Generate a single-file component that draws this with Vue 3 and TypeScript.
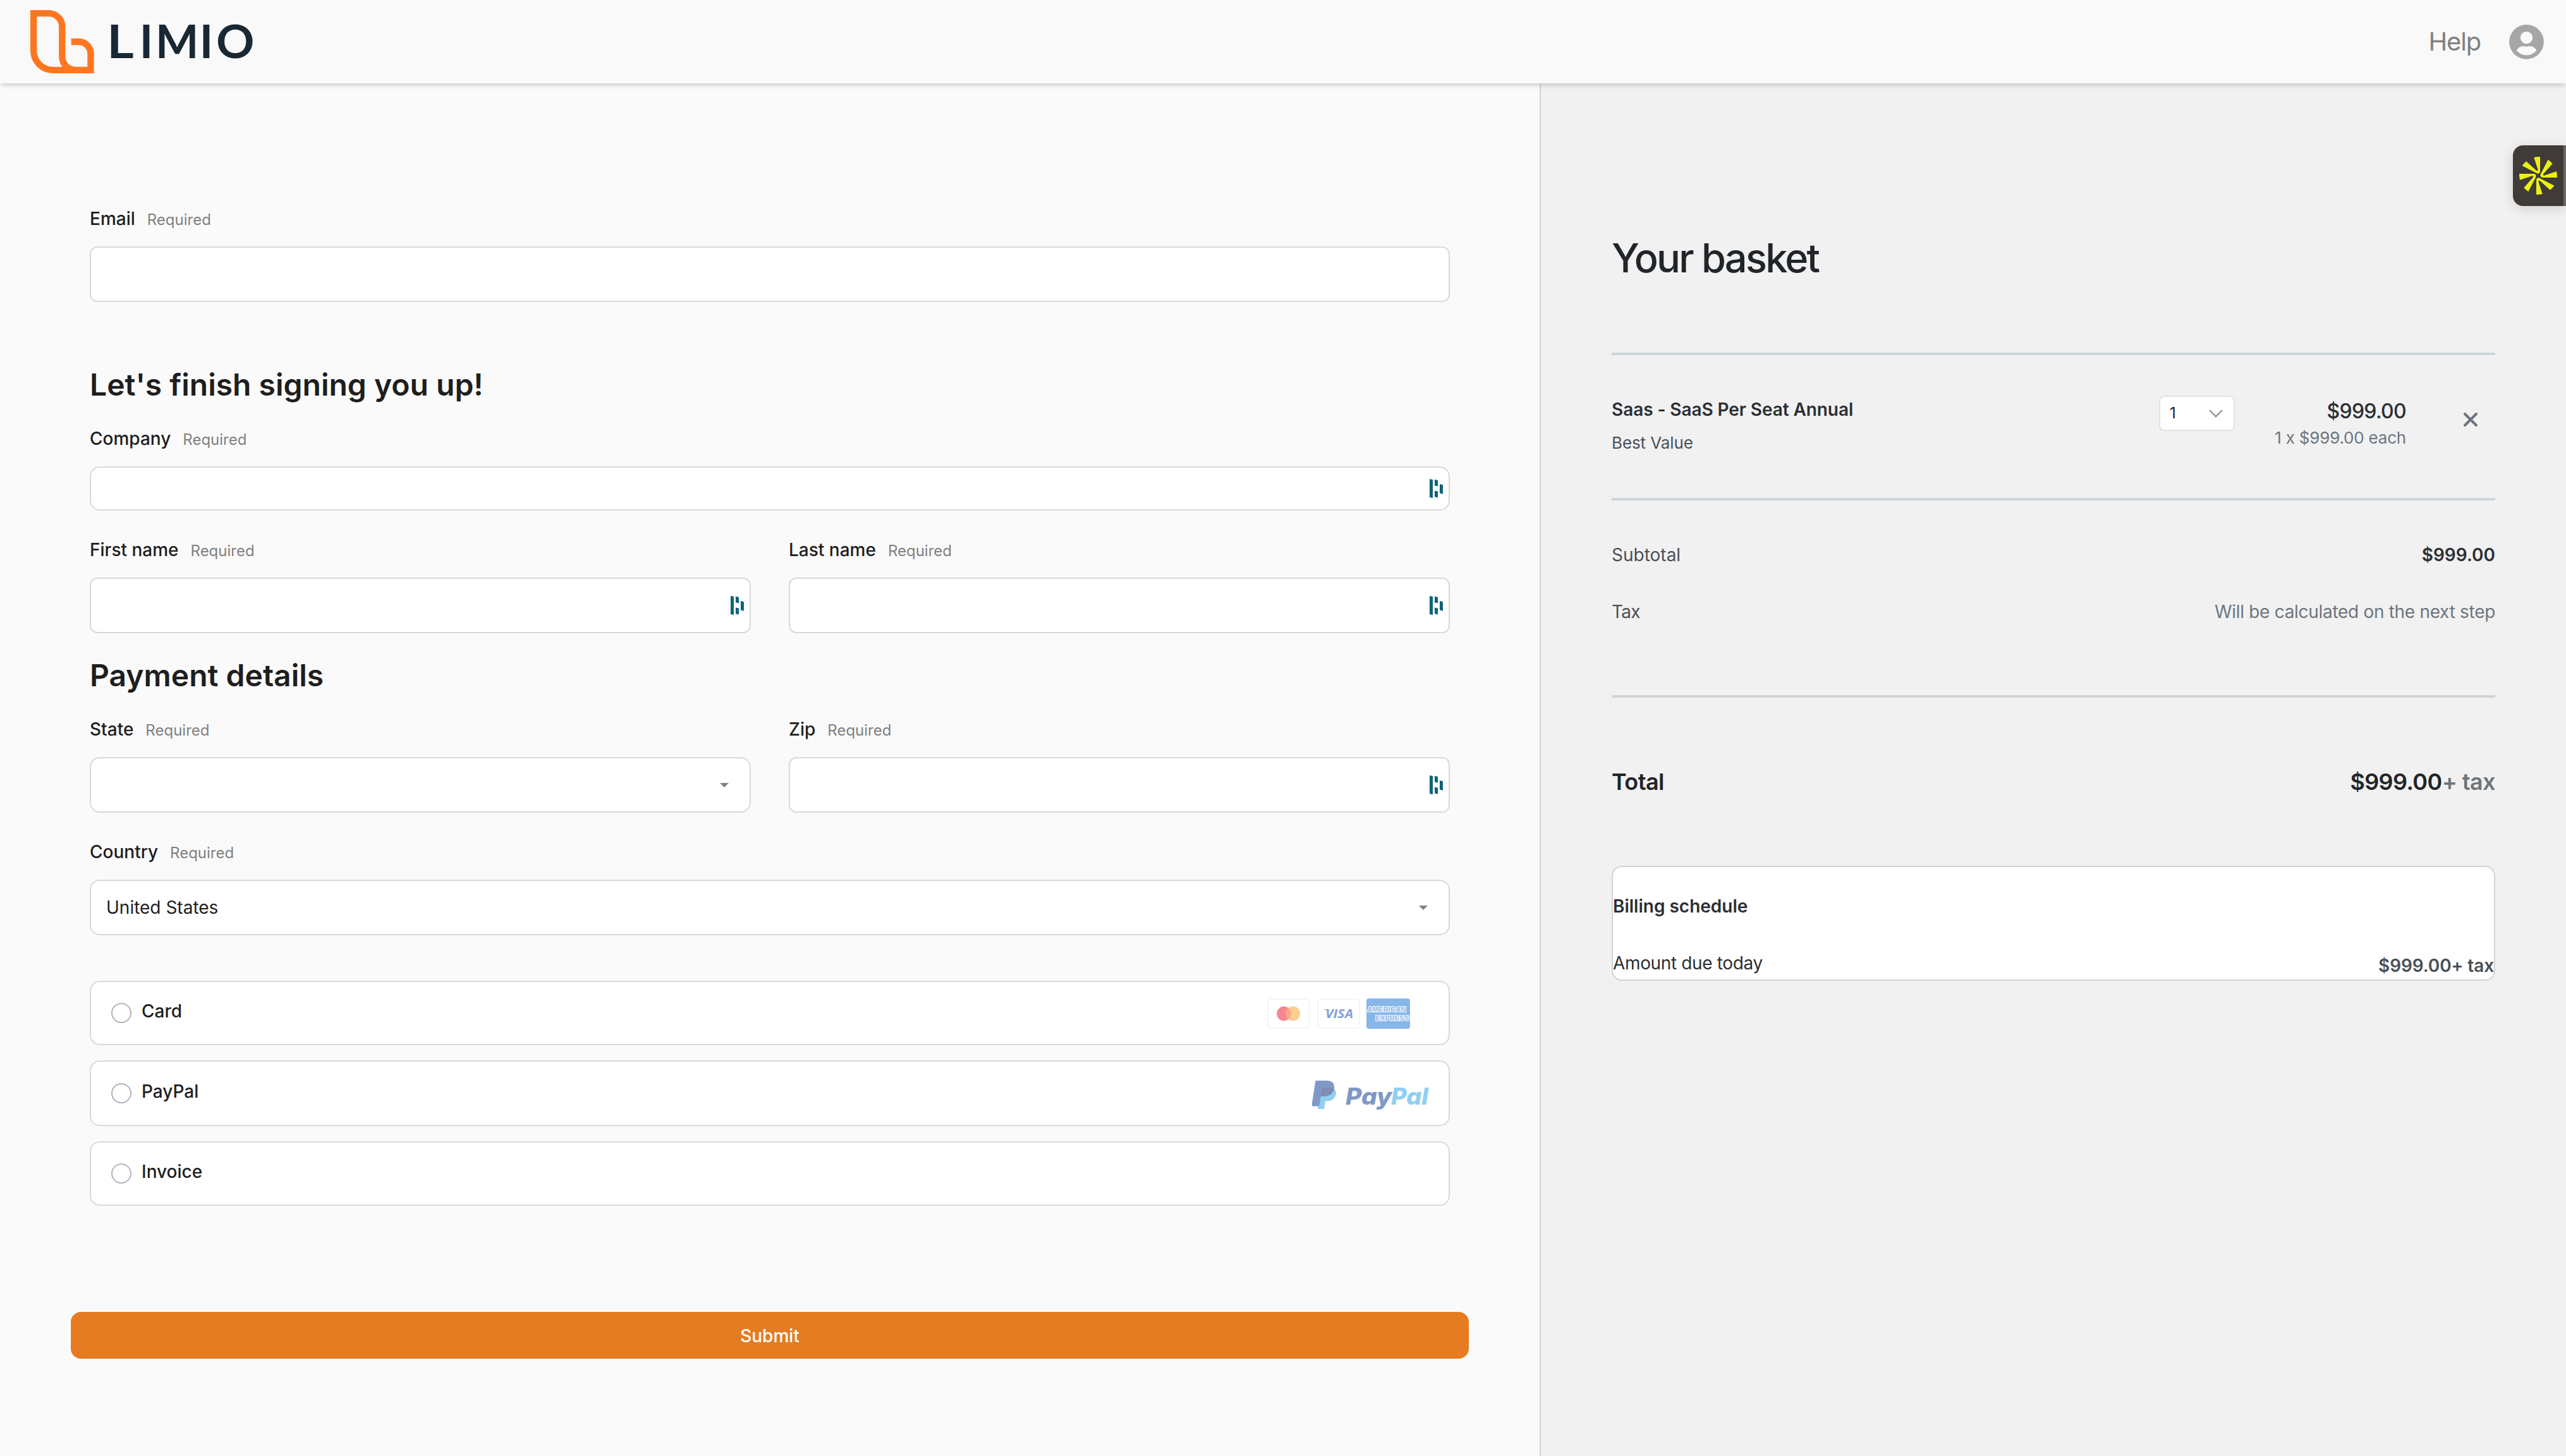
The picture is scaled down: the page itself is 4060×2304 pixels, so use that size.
<script setup lang="ts">
import { h } from 'vue'

interface Field {
  label: string
  kind: 'text' | 'select'
  value?: string
  compact?: boolean
  soft?: boolean
  manager?: boolean
}

const emailRow: Field[] = [{ label: 'Email', kind: 'text' }]
const companyRow: Field[] = [{ label: 'Company', kind: 'text', soft: true, manager: true, compact: true }]
const nameRow: Field[] = [
  { label: 'First name', kind: 'text', manager: true },
  { label: 'Last name', kind: 'text', manager: true },
]
const regionRow: Field[] = [
  { label: 'State', kind: 'select', soft: true },
  { label: 'Zip', kind: 'text', manager: true },
]
const countryRow: Field[] = [{ label: 'Country', kind: 'select', soft: true, value: 'United States' }]

const FieldRow = (props: { fields: Field[] }) =>
  h(
    'div',
    { class: 'row' },
    props.fields.map((f) =>
      h('div', { class: 'field' }, [
        h('div', { class: 'label-line' }, [
          h('label', { class: 'label' }, f.label),
          h('span', { class: 'required' }, 'Required'),
        ]),
        h('div', { class: ['control', f.soft && 'soft', f.compact && 'compact'] }, [
          h('span', { class: 'value' }, f.value ?? ''),
          f.kind === 'select'
            ? h('svg', { class: 'caret', viewBox: '0 0 14 7' }, [h('path', { d: 'M0 0H14L7 7Z', fill: '#808080' })])
            : null,
          f.manager
            ? h('svg', { class: 'manager', viewBox: '0 0 21 30' }, [
                h('path', {
                  d: 'M0 0L5 1V30L0 29ZM8 .8L13 2V11.6L8 10.4ZM8 18.4L13 19.6V29.4L8 28.2ZM16 8L21 9.2V23.8L16 22.6Z',
                  fill: '#0e6478',
                }),
              ])
            : null,
        ]),
      ]),
    ),
  )
FieldRow.props = ['fields']
</script>

<template>
  <div class="page">
    <header class="topbar">
      <svg class="logo" viewBox="0 0 1080 300">
        <g fill="none" stroke="#ff7620" stroke-width="31">
          <path d="M111.500 284.500H108A92 92 0 0 1 15.500 190V15.500H88A63 63 0 0 1 151 79V220A64 64 0 0 0 215 284.500" />
          <path d="M106 284.500H286.500V207A57 57 0 0 0 229 150H194" />
        </g>
        <g class="wordmark">
          <text transform="translate(364 229) scale(1.13 1)">L</text>
          <text x="518" y="229">I</text>
          <text x="594" y="229">M</text>
          <text x="803" y="229">I</text>
          <text transform="translate(882 229) scale(1.035 1)">O</text>
        </g>
      </svg>
      <nav class="top-actions">
        <a class="help">Help</a>
        <svg class="avatar" viewBox="570 116 165 165">
          <circle cx="652.500" cy="198" r="82" fill="#a6a6a6" />
          <circle cx="652.500" cy="178" r="29" fill="#f9f9f9" />
          <path d="M605 238Q618 217 637 218Q653 222 668 218Q688 217 700 238Q680 261 652 261Q625 261 605 238Z" fill="#f9f9f9" />
        </svg>
      </nav>
    </header>

    <main class="content">
      <section class="checkout">
        <FieldRow :fields="emailRow" />
        <h2 class="heading h-finish">Let's finish signing you up!</h2>
        <FieldRow :fields="companyRow" />
        <FieldRow class="next" :fields="nameRow" />
        <h2 class="heading h-payment">Payment details</h2>
        <FieldRow :fields="regionRow" />
        <FieldRow class="next" :fields="countryRow" />

        <div class="methods">
          <div class="method">
            <span class="radio"></span>
            <span class="method-name">Card</span>
            <svg class="cards" viewBox="0 0 226 48">
              <rect x="1" y="1" width="66" height="46" rx="5" fill="#fff" stroke="#f2f2f2" stroke-width="1.500" />
              <circle cx="26.500" cy="24" r="11.400" fill="#f58792" />
              <circle cx="40.800" cy="24" r="11.400" fill="#fbcd91" />
              <path d="M33.650 15.100A11.400 11.400 0 0 1 33.650 32.900A11.400 11.400 0 0 1 33.650 15.100Z" fill="#fca885" />
              <rect x="80" y="1" width="66" height="46" rx="5" fill="#fff" stroke="#f2f2f2" stroke-width="1.500" />
              <text class="visa" x="92" y="31" textLength="44" lengthAdjust="spacingAndGlyphs">VISA</text>
              <path d="M90 17H97L98 20Q94 18 90 17.500Z" fill="#85a1d6" />
              <rect x="157" y="0" width="69" height="48" rx="4" fill="#87b6e8" />
              <text class="amex" x="158.500" y="20.500" textLength="61" lengthAdjust="spacingAndGlyphs">AMERICAN</text>
              <text class="amex" x="171.500" y="34.500" textLength="53" lengthAdjust="spacingAndGlyphs">EXPRESS</text>
            </svg>
          </div>
          <div class="method tall">
            <span class="radio"></span>
            <span class="method-name">PayPal</span>
            <svg class="paypal" viewBox="0 0 184 60">
              <path d="M14 10H30Q38 13 38 20Q36 32 24 32.500H21L19 45H9Z" fill="#8fcff0" />
              <path d="M5.500 0H25Q36 1 35 12Q33 24 20 24.500H14L11 40.500H0L0 35Z" fill="#8098c6" />
              <path d="M16 11H30Q33 11 34.500 13.500Q32 24 20 24.500H13.500Z" fill="#808cb4" />
              <text class="pp" x="53" y="37.500" textLength="73" lengthAdjust="spacingAndGlyphs" fill="#8098c6">Pay</text>
              <text class="pp" x="125" y="37.500" textLength="59" lengthAdjust="spacingAndGlyphs" fill="#8fcff0">Pal</text>
            </svg>
          </div>
          <div class="method">
            <span class="radio"></span>
            <span class="method-name">Invoice</span>
          </div>
        </div>

        <button class="submit" type="button">Submit</button>
      </section>

      <aside class="basket">
        <h1 class="title">Your basket</h1>
        <div class="item">
          <div class="item-info">
            <div class="item-name">Saas - SaaS Per Seat Annual</div>
            <div class="item-note">Best Value</div>
          </div>
          <div class="qty">
            <span class="qty-value">1</span>
            <svg class="chevron" viewBox="0 0 22 13">
              <path d="M1.200 1.200L11 11.200L20.800 1.200" fill="none" stroke="#999" stroke-width="2.400" />
            </svg>
          </div>
          <div class="item-price">
            <div class="price">$999.00</div>
            <div class="each">1 x $999.00 each</div>
          </div>
          <svg class="remove" viewBox="0 0 22 22">
            <path d="M2 2L20 20M20 2L2 20" stroke="#6c757d" stroke-width="4" stroke-linecap="round" />
          </svg>
        </div>
        <div class="sums">
          <div class="line">
            <span>Subtotal</span>
            <span class="amount">$999.00</span>
          </div>
          <div class="line">
            <span class="tax">Tax</span>
            <span class="pending">Will be calculated on the next step</span>
          </div>
        </div>
        <div class="total">
          <span>Total</span>
          <span>$999.00<span class="plus">+ tax</span></span>
        </div>
        <div class="schedule">
          <div class="sch-title">Billing schedule</div>
          <div class="sch-line">
            <span class="sch-label">Amount due today</span>
            <span class="sch-amount">$999.00+ tax</span>
          </div>
        </div>
      </aside>
    </main>

    <div class="widget">
      <svg class="burst" viewBox="-90 -90 180 180">
        <path
          v-for="turn in [0, 90, 180, 270]"
          :key="turn"
          :transform="`rotate(${turn})`"
          d="M-20 -87Q-6 -90 9 -90V-22Q8 -10 -2 -10Q-6 -10 -12 -14L-76 -47Q-68 -58 -57 -68L-9 -25Q-1 -20 -1 -28Z"
          fill="#ebf212"
        />
      </svg>
    </div>
  </div>
</template>

<style>
body {
  margin: 0;
}

.page,
.page * {
  box-sizing: border-box;
}

.row {
  display: flex;
  gap: 60px;
}

.row.next {
  margin-top: 42px;
}

.field {
  flex: 1;
}

.label-line {
  display: flex;
  align-items: baseline;
  height: 40px;
  line-height: 40px;
  margin-bottom: 24px;
}

.label {
  font-size: 28px;
  font-weight: 500;
  color: #1e1e1e;
}

.required {
  font-size: 24px;
  color: #808080;
  margin-left: 19px;
}

.control {
  display: flex;
  align-items: center;
  height: 88px;
  padding: 0 9px 0 24px;
  background: #fff;
  border: 2px solid #d9d9d9;
  border-radius: 12px;
}

.control.soft {
  border-radius: 16px;
}

.control.compact {
  height: 70px;
}

.value {
  flex: 1;
  font-size: 28px;
  line-height: 40px;
  color: #1e1e1e;
}

.caret {
  width: 14px;
  height: 7px;
  margin-right: 24px;
}

.manager {
  width: 21px;
  height: 30px;
  margin-bottom: 1px;
}
</style>

<style scoped>
.page {
  position: relative;
  display: flex;
  flex-direction: column;
  width: 4060px;
  height: 2304px;
  overflow: hidden;
  background: #fafafa;
  font-family: Inter, "Liberation Sans", sans-serif;
}

.topbar {
  position: relative;
  z-index: 1;
  display: flex;
  align-items: center;
  justify-content: space-between;
  height: 132px;
  flex: none;
  padding: 0 35px 0 48px;
  background: #f9f9f9;
  box-shadow: 0 4px 8px -2px rgba(0, 0, 0, 0.22);
}

.logo {
  width: 360px;
  height: 100px;
}

.wordmark {
  font: 700 217px Lato, sans-serif;
  fill: #192833;
}

.top-actions {
  display: flex;
  align-items: center;
}

.help {
  font-size: 40px;
  line-height: 50px;
  letter-spacing: -1.2px;
  color: #808080;
  margin-right: 45px;
}

.avatar {
  width: 55px;
  height: 55px;
}

.content {
  display: flex;
  flex: 1;
}

.checkout {
  width: 2438px;
  padding: 194px 142px 0;
  border-right: 2px solid #d0d5da;
}

.heading {
  margin: 101px 0 35px;
  font-size: 48px;
  line-height: 60px;
  font-weight: 600;
  color: #1e1e1e;
}

.h-payment {
  margin-top: 37px;
}

.methods {
  display: flex;
  flex-direction: column;
  gap: 24px;
  margin-top: 72px;
}

.method {
  display: flex;
  align-items: center;
  height: 102px;
  padding: 0 32px;
  background: #fff;
  border: 2px solid #d9d9d9;
  border-radius: 16px;
}

.method.tall {
  height: 104px;
}

.radio {
  width: 32px;
  height: 32px;
  margin-bottom: 1px;
  border: 2px solid #adb5bd;
  border-radius: 50%;
}

.method-name {
  flex: 1;
  margin-left: 16px;
  padding-bottom: 7px;
  font-size: 28px;
  line-height: 40px;
  font-weight: 500;
  color: #1e1e1e;
}

.cards {
  width: 226px;
  height: 48px;
  margin: 2px 29px 0 0;
}

.visa {
  font: italic 700 20px "Open Sans", sans-serif;
  fill: #85a1d6;
}

.amex {
  font: 700 10.500px "Liberation Sans", sans-serif;
  fill: #87b6e8;
  stroke: #fff;
  stroke-width: 2px;
  paint-order: stroke;
}

.paypal {
  width: 184px;
  height: 60px;
  margin-top: 20px;
  overflow: visible;
}

.pp {
  font: italic 800 37px Inter, sans-serif;
}

.submit {
  display: block;
  width: 2212px;
  height: 74px;
  margin: 168px 0 0 -30px;
  padding: 1px 0 0;
  border: 0;
  border-radius: 16px;
  background: #e57c22;
  color: #fff;
  font: 500 28px Inter, sans-serif;
}

.basket {
  flex: 1;
  padding: 236px 112px 0;
  background: #f1f1f1;
  color: #495057;
  font-size: 28px;
  line-height: 40px;
}

.title {
  margin: 0 0 110px;
  font-size: 63px;
  line-height: 80px;
  font-weight: 550;
  letter-spacing: -2.7px;
  color: #212529;
}

.item {
  display: flex;
  align-items: flex-start;
  height: 234px;
  border-top: 4px solid #ced4d8;
  border-bottom: 4px solid #ced4d8;
}

.item-info {
  flex: 1;
  padding-top: 66px;
}

.item-name {
  font-weight: 600;
  letter-spacing: -0.08px;
  color: #2b2f33;
}

.item-note {
  margin-top: 13px;
  font-size: 26px;
  letter-spacing: -0.1px;
}

.qty {
  display: flex;
  align-items: center;
  justify-content: space-between;
  width: 120px;
  height: 56px;
  margin-top: 64px;
  padding: 0 17px 0 15px;
  background: #fff;
  border: 2px solid #dee2e6;
  border-radius: 8px;
  font-size: 24px;
  color: #1e1e1e;
}

.chevron {
  width: 22px;
  height: 13px;
}

.item-price {
  width: 271px;
  padding-top: 69px;
  text-align: right;
}

.price {
  font-size: 32px;
  font-weight: 550;
  letter-spacing: -0.7px;
  color: #2b2f33;
}

.each {
  margin-top: 6px;
  font-size: 26px;
  line-height: 32px;
  letter-spacing: -0.2px;
  color: #6c757d;
}

.remove {
  width: 22px;
  height: 22px;
  margin: 91px 28px 0 91px;
}

.sums {
  display: flex;
  flex-direction: column;
  gap: 50px;
  height: 312px;
  padding-top: 66px;
  border-bottom: 4px solid #ced4d8;
}

.line,
.total,
.sch-line {
  display: flex;
  justify-content: space-between;
}

.amount {
  font-weight: 600;
  color: #2b2f33;
}

.tax {
  letter-spacing: -0.8px;
}

.pending {
  letter-spacing: -0.3px;
  color: #6c757d;
}

.total {
  margin: 108px 0;
  font-size: 36px;
  line-height: 50px;
  font-weight: 600;
  letter-spacing: -0.6px;
  color: #212529;
}

.plus {
  color: #6c757d;
}

.schedule {
  height: 182px;
  padding-top: 42px;
  background: #fff;
  border: 2px solid #ced4d8;
  border-radius: 16px;
  color: #2b2f33;
}

.sch-title {
  margin-bottom: 50px;
  font-weight: 600;
}

.sch-label {
  letter-spacing: -0.35px;
}

.sch-amount {
  padding-top: 4px;
  font-weight: 600;
  letter-spacing: -0.1px;
  color: #495057;
}

.widget {
  position: absolute;
  top: 230px;
  right: 0;
  display: flex;
  align-items: center;
  width: 84px;
  height: 96px;
  padding-left: 10px;
  background: #403b38;
  border-right: 4px solid #6b6765;
  border-radius: 16px 0 0 16px;
  box-shadow: 0 4px 20px rgba(0, 0, 0, 0.14);
}

.burst {
  width: 60px;
  height: 60px;
}
</style>
